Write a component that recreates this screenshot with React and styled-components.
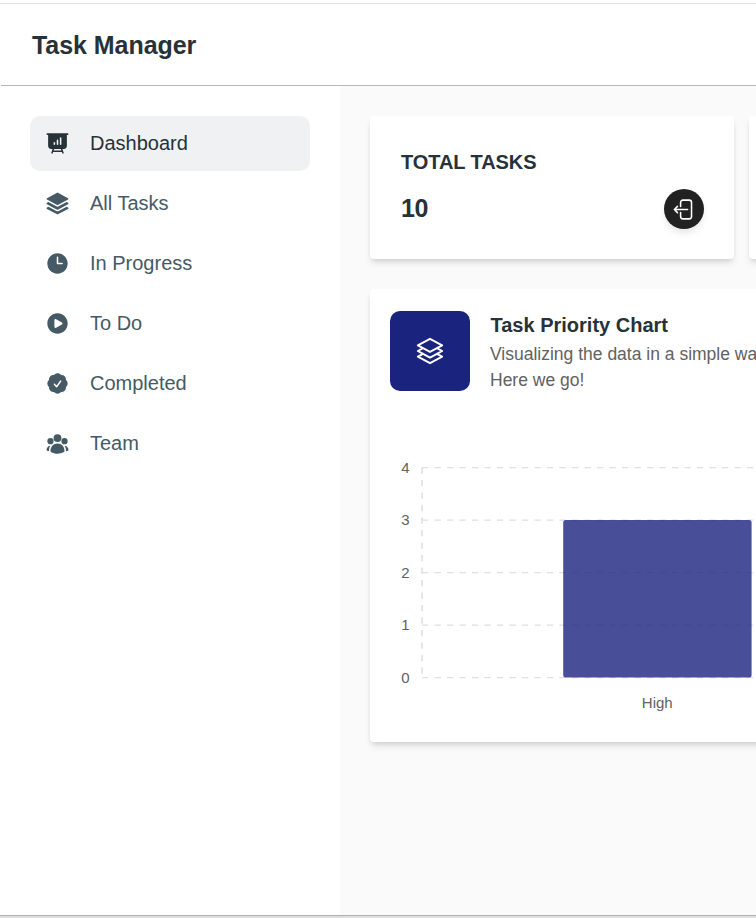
import React from "react";
import styled, { createGlobalStyle } from "styled-components";
import {
  HiPresentationChartBar,
  HiSquare3Stack3D,
  HiClock,
  HiPlayCircle,
  HiCheckBadge,
  HiUserGroup,
  HiOutlineSquare3Stack3D,
} from "react-icons/hi2";

const GlobalStyle = createGlobalStyle`
  *, *::before, *::after { box-sizing: border-box; }
  body {
    margin: 0;
    overflow: hidden;
    background: #fff;
    color: #263238;
    font-family: "Liberation Sans", Arial, sans-serif;
  }
`;

const Page = styled.div`
  display: flex;
  flex-direction: column;
  width: 100%;
  height: 918px;
  padding-top: 3px;
  overflow: hidden;
`;

const TopEdge = styled.div`
  flex: none;
  height: 1px;
  background: #e0e0e0;
`;

const Header = styled.header`
  flex: none;
  display: flex;
  align-items: center;
  height: 82px;
  margin-left: 1px;
  padding: 0 31px;
  border-bottom: 1px solid #b8b8b8;
`;

const Brand = styled.h1`
  margin: 0;
  font-size: 25px;
  line-height: 34px;
  font-weight: 700;
  letter-spacing: -0.05px;
`;

const Body = styled.div`
  flex: 1;
  display: flex;
  min-height: 0;
`;

const Sidebar = styled.nav`
  flex: none;
  display: flex;
  flex-direction: column;
  gap: 5px;
  width: 340px;
  padding: 30px;
`;

const NavItem = styled.a`
  display: flex;
  align-items: center;
  gap: 20px;
  height: 55px;
  padding: 0 15px;
  border-radius: 10px;
  font-size: 20px;
  color: ${(p) => (p.$active ? "#263238" : "#455a64")};
  background: ${(p) => (p.$active ? "#f0f1f2" : "transparent")};

  svg { flex: none; width: 25px; height: 25px; }
`;

const Main = styled.main`
  flex: 1;
  min-width: 0;
  padding: 30px 0 0 30px;
  overflow: hidden;
  background: #fafafa;
`;

const Stats = styled.section`
  display: grid;
  grid-template-columns: 364px 364px;
  gap: 15px;
  margin-bottom: 30px;
`;

const Card = styled.article`
  border-radius: 4px;
  background: #fff;
  box-shadow: 0 5px 7.5px -1px rgba(0, 0, 0, 0.1), 0 2.5px 5px -2px rgba(0, 0, 0, 0.1);
`;

const StatCard = styled(Card)`
  display: flex;
  flex-direction: column;
  height: 143px;
  padding: 30px 30px 0 31px;
`;

const StatLabel = styled.h2`
  margin: 0;
  font-size: 20px;
  line-height: 33px;
  font-weight: 700;
  letter-spacing: -0.08px;
`;

const StatRow = styled.div`
  display: flex;
  align-items: center;
  justify-content: space-between;
  margin-top: 10px;
  height: 40px;
`;

const StatValue = styled.span`
  padding-bottom: 2px;
  font-size: 25px;
  font-weight: 700;
  letter-spacing: -0.5px;
`;

const RoundBadge = styled.span`
  display: flex;
  align-items: center;
  justify-content: center;
  width: 40px;
  height: 40px;
  border-radius: 50%;
  color: #fff;
  background: #212121;
  box-shadow: 0 5px 7px -1px rgba(0, 0, 0, 0.1);
`;

const ChartCard = styled(Card)`
  width: 743px;
  height: 453px;
`;

const ChartHeader = styled.header`
  display: flex;
  gap: 20px;
  height: 104px;
  padding: 22px 20px 0;
`;

const ChartBadge = styled.div`
  flex: none;
  display: flex;
  align-items: center;
  justify-content: center;
  width: 80px;
  height: 80px;
  border-radius: 10px;
  color: #fff;
  background: #1a237e;

  svg { width: 30px; height: 30px; }
`;

const ChartTitle = styled.h3`
  margin: 0 0 1px 0.5px;
  font-size: 20px;
  line-height: 29px;
  font-weight: 700;
`;

const ChartText = styled.p`
  width: 320px;
  margin: 0;
  font-size: 17.5px;
  line-height: 26px;
  color: #616161;
`;

const ChartSvg = styled.svg`
  display: block;
  width: 743px;
  height: 300px;
  margin-top: 38px;

  text {
    font-size: 15px;
    fill: #616161;
  }
`;

const ExitIcon = () => (
  <svg width="25" height="25" viewBox="0 0 24 24" fill="none" stroke="currentColor" strokeWidth="1.5" strokeLinecap="round" strokeLinejoin="round">
    <path d="M8.25 9V5.25A2.25 2.25 0 0 1 10.5 3h6a2.25 2.25 0 0 1 2.25 2.25v13.5A2.25 2.25 0 0 1 16.5 21h-6a2.25 2.25 0 0 1-2.25-2.25V15m-3 0-3-3m0 0 3-3m-3 3H15" />
  </svg>
);

const NAV = [
  { label: "Dashboard", icon: HiPresentationChartBar, active: true },
  { label: "All Tasks", icon: HiSquare3Stack3D },
  { label: "In Progress", icon: HiClock },
  { label: "To Do", icon: HiPlayCircle },
  { label: "Completed", icon: HiCheckBadge },
  { label: "Team", icon: HiUserGroup },
];

const TICKS = [4, 3, 2, 1, 0];
const tickY = (value) => 246.6 - value * 52.5;

const PriorityChart = () => (
  <ChartSvg viewBox="0 0 743 300">
    <g stroke="#e0e0e0" strokeWidth="1.25" strokeDasharray="6.25 6.25">
      {TICKS.map((t) => (
        <line key={t} x1="52" x2="723" y1={tickY(t)} y2={tickY(t)} />
      ))}
      <line x1="52" x2="52" y1={tickY(4)} y2={tickY(0)} strokeWidth="1.6" />
    </g>
    {TICKS.map((t) => (
      <text key={t} x="39.6" y={tickY(t) + 5.2} textAnchor="end">{t}</text>
    ))}
    <rect x="193.2" y={tickY(3)} width="188.4" height={tickY(0) - tickY(3)} rx="2.5" fill="#1a237e" fillOpacity="0.8" />
    <text x="287.3" y="277" textAnchor="middle">High</text>
  </ChartSvg>
);

const WindowEdge = styled.footer`
  flex: none;
  height: 3px;
  border-top: 1px solid #b0b0b0;
  background: #dedede;
`;

export default function App() {
  return (
    <>
      <GlobalStyle />
      <Page>
        <TopEdge />
        <Header>
          <Brand>Task Manager</Brand>
        </Header>
        <Body>
          <Sidebar>
            {NAV.map(({ label, icon: Icon, active }) => (
              <NavItem key={label} $active={active}>
                <Icon />
                {label}
              </NavItem>
            ))}
          </Sidebar>
          <Main>
            <Stats>
              <StatCard>
                <StatLabel>TOTAL TASKS</StatLabel>
                <StatRow>
                  <StatValue>10</StatValue>
                  <RoundBadge><ExitIcon /></RoundBadge>
                </StatRow>
              </StatCard>
              <StatCard />
            </Stats>
            <ChartCard>
              <ChartHeader>
                <ChartBadge><HiOutlineSquare3Stack3D /></ChartBadge>
                <div>
                  <ChartTitle>Task Priority Chart</ChartTitle>
                  <ChartText>Visualizing the data in a simple way. Here we go!</ChartText>
                </div>
              </ChartHeader>
              <PriorityChart />
            </ChartCard>
          </Main>
        </Body>
        <WindowEdge />
      </Page>
    </>
  );
}
